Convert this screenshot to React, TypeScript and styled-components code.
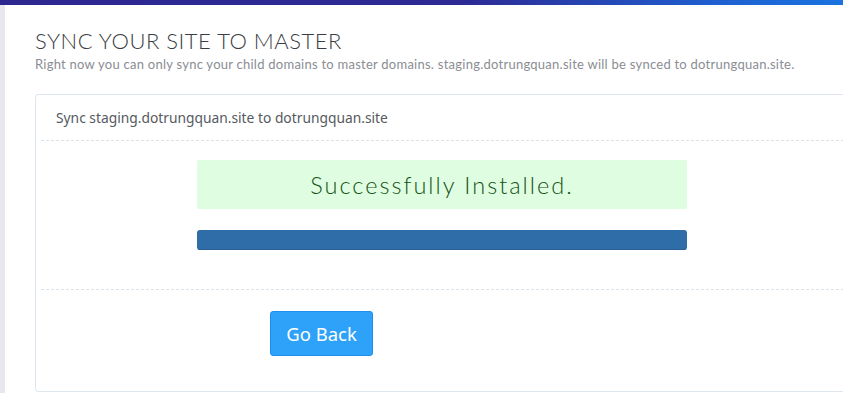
import styled, { createGlobalStyle } from "styled-components"

const GlobalStyle = createGlobalStyle`
	html, body {
		margin: 0;
		padding: 0;
		background: #ffffff;
		overflow: hidden;
	}
	* {
		box-sizing: border-box;
	}
`

export default function App() {
	return (
		<>
			<GlobalStyle />
			<TopBar />
			<Layout>
				<SideStrip />
				<Main>
					<PageTitle>SYNC YOUR SITE TO MASTER</PageTitle>
					<PageHint>
						Right now you can only sync your child domains to master domains.
						staging.dotrungquan.site will be synced to dotrungquan.site.
					</PageHint>

					<Card>
						<CardHeader>
							Sync staging.dotrungquan.site to dotrungquan.site
						</CardHeader>
						<CardBody>
							<Alert>Successfully Installed.</Alert>
							<Progress>
								<ProgressFill style={{ width: "100%" }} />
							</Progress>
						</CardBody>
						<CardFooter>
							<Button type="button">Go Back</Button>
						</CardFooter>
					</Card>
				</Main>
			</Layout>
		</>
	)
}

const TopBar = styled.div`
	height: 5px;
	background: linear-gradient(90deg, #2d2890 0%, #2d2a94 55%, #1f5fcf 85%, #1a73e0 100%);
`

const Layout = styled.div`
	display: flex;
	min-height: 388px;
`

const SideStrip = styled.div`
	width: 5px;
	background: #e7e8ee;
	flex-shrink: 0;
`

const Main = styled.main`
	flex: 1;
	padding: 23px 0 0 30px;
	font-family: "Noto Sans", "Open Sans", sans-serif;
`

const PageTitle = styled.h1`
	margin: 0;
	font-family: Lato, "Open Sans", sans-serif;
	font-weight: 300;
	font-size: 22px;
	line-height: 26px;
	color: #3a3d44;
	letter-spacing: 0.5px;
`

const PageHint = styled.p`
	margin: 2px 0 0;
	font-family: Lato, "Open Sans", sans-serif;
	font-weight: 400;
	font-size: 13px;
	line-height: 16px;
	color: #8a8d93;
	letter-spacing: 0.25px;
	white-space: nowrap;
`

const Card = styled.section`
	margin-top: 22px;
	width: 830px;
	height: 298px;
	border: 1px solid #dfe6ee;
	border-radius: 3px;
	display: flex;
	flex-direction: column;
`

const CardHeader = styled.div`
	margin: 0 5px;
	padding: 12px 15px 11px;
	border-bottom: 1px dashed #dbe3ea;
	font-size: 13.8px;
	line-height: 22px;
	color: #555a60;
`

const CardBody = styled.div`
	margin: 0 5px;
	padding: 19px 0 39px 156px;
	border-bottom: 1px dashed #dbe3ea;
	display: flex;
	flex-direction: column;
	gap: 21px;
`

const Alert = styled.div`
	width: 490px;
	height: 49px;
	display: flex;
	align-items: center;
	justify-content: center;
	background: #dffde0;
	border-radius: 2px;
	font-family: Lato, "Open Sans", sans-serif;
	font-weight: 300;
	font-size: 23.5px;
	letter-spacing: 2px;
	color: #165216;
`

const Progress = styled.div`
	width: 490px;
	height: 20px;
	border-radius: 3px;
	background: #e9ecef;
	overflow: hidden;
`

const ProgressFill = styled.div`
	height: 100%;
	background: #2e6da8;
	border-bottom: 1px solid #295f93;
`

const CardFooter = styled.div`
	padding: 21px 0 0 234px;
`

const Button = styled.button`
	width: 103px;
	height: 45px;
	border: 1px solid #1c8ff0;
	border-radius: 3px;
	background: #2ea1f8;
	color: #ffffff;
	font-family: "Noto Sans", "Open Sans", sans-serif;
	font-size: 18.5px;
	cursor: pointer;
	padding: 0;
`
